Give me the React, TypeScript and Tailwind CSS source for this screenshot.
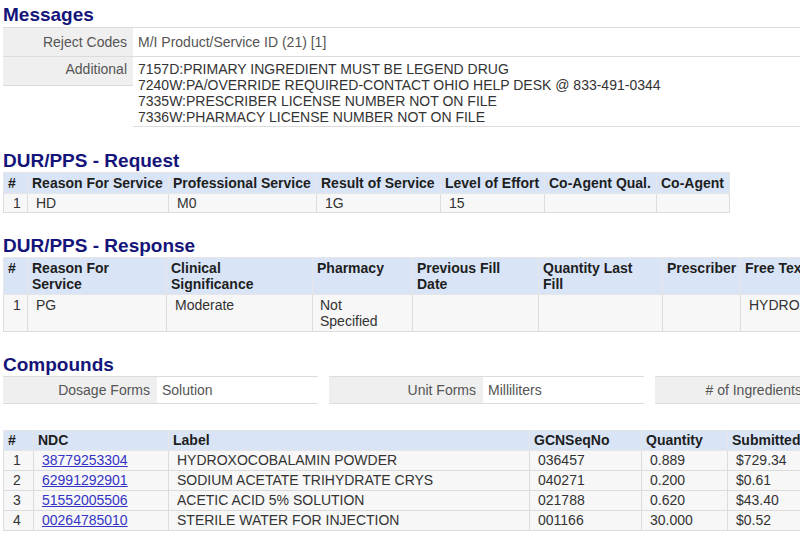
import React from 'react'

const font = { fontFamily: '"Liberation Sans", Arial, sans-serif' }

const heading = 'text-[19px] leading-[22px] font-bold text-[#14147a]'
const th = 'border border-[#e6e6e6] bg-[#d9e5f6] pl-[4px] pr-[3px] py-[2px] text-left align-top font-bold text-[#1e1e1e] leading-[16px] overflow-hidden whitespace-nowrap'
const td = 'border border-[#dcdcdc] bg-[#f7f7f7] pl-[8px] pr-[3px] align-top leading-[16px] text-[#333] overflow-hidden whitespace-nowrap'

const messages = [
  '7157D:PRIMARY INGREDIENT MUST BE LEGEND DRUG',
  '7240W:PA/OVERRIDE REQUIRED-CONTACT OHIO HELP DESK @ 833-491-0344',
  '7335W:PRESCRIBER LICENSE NUMBER NOT ON FILE',
  '7336W:PHARMACY LICENSE NUMBER NOT ON FILE',
]

const compounds = [
  { ndc: '38779253304', label: 'HYDROXOCOBALAMIN POWDER', gcn: '036457', qty: '0.889', submitted: '$729.34' },
  { ndc: '62991292901', label: 'SODIUM ACETATE TRIHYDRATE CRYS', gcn: '040271', qty: '0.200', submitted: '$0.61' },
  { ndc: '51552005506', label: 'ACETIC ACID 5% SOLUTION', gcn: '021788', qty: '0.620', submitted: '$43.40' },
  { ndc: '00264785010', label: 'STERILE WATER FOR INJECTION', gcn: '001166', qty: '30.000', submitted: '$0.52' },
]

const fields = [
  { label: 'Dosage Forms', value: 'Solution' },
  { label: 'Unit Forms', value: 'Milliliters' },
  { label: '# of Ingredients', value: '4' },
]

const App: React.FC = () => {
  return (
    <div className="w-[800px] h-[553px] overflow-hidden bg-white text-[14px] text-[#333]" style={font}>
      <div className="pl-[3px] pt-[4px]">
        <h2 className={heading}>Messages</h2>
        <div className="mt-[1px] border-t border-[#dcdcdc]">
          <div className="flex items-start">
            <div className="w-[130px] shrink-0 bg-[#efefef] border-b border-[#dcdcdc] text-right pr-[6px] pt-[6px] pb-[6px] leading-[16px] text-[#555]">
              Reject Codes
            </div>
            <div className="flex-1 border-b border-[#dcdcdc] pl-[5px] pt-[6px] pb-[6px] leading-[16px] text-[#555]">
              M/I Product/Service ID (21) [1]
            </div>
          </div>
          <div className="flex items-start">
            <div className="w-[130px] shrink-0 bg-[#efefef] border-b border-[#dcdcdc] text-right pr-[6px] pt-[4px] pb-[8px] leading-[16px] text-[#555]">
              Additional
            </div>
            <div className="flex-1 border-b border-[#dcdcdc] pl-[5px] pt-[4px] pb-[1px] leading-[16px] text-[#333]">
              {messages.map((m) => (
                <div key={m}>{m}</div>
              ))}
            </div>
          </div>
        </div>

        <h2 className={`${heading} mt-[23px]`}>DUR/PPS - Request</h2>
        <table className="table-fixed border-collapse w-[726px]">
          <colgroup>
            <col className="w-[24px]" />
            <col className="w-[141px]" />
            <col className="w-[148px]" />
            <col className="w-[124px]" />
            <col className="w-[104px]" />
            <col className="w-[112px]" />
            <col className="w-[73px]" />
          </colgroup>
          <thead>
            <tr>
              <th className={th}>#</th>
              <th className={th}>Reason For Service</th>
              <th className={th}>Professional Service</th>
              <th className={th}>Result of Service</th>
              <th className={th}>Level of Effort</th>
              <th className={th}>Co-Agent Qual.</th>
              <th className={th}>Co-Agent</th>
            </tr>
          </thead>
          <tbody>
            <tr>
              <td className={`${td} py-[1px] !pl-[9px]`}>1</td>
              <td className={`${td} py-[1px]`}>HD</td>
              <td className={`${td} py-[1px]`}>M0</td>
              <td className={`${td} py-[1px]`}>1G</td>
              <td className={`${td} py-[1px]`}>15</td>
              <td className={`${td} py-[1px]`}></td>
              <td className={`${td} py-[1px]`}></td>
            </tr>
          </tbody>
        </table>

        <h2 className={`${heading} mt-[22px]`}>DUR/PPS - Response</h2>
        <table className="table-fixed border-collapse w-[937px]">
          <colgroup>
            <col className="w-[24px]" />
            <col className="w-[139px]" />
            <col className="w-[146px]" />
            <col className="w-[100px]" />
            <col className="w-[126px]" />
            <col className="w-[124px]" />
            <col className="w-[78px]" />
            <col className="w-[200px]" />
          </colgroup>
          <thead>
            <tr>
              <th className={th}>#</th>
              <th className={th}>Reason For<br />Service</th>
              <th className={th}>Clinical<br />Significance</th>
              <th className={th}>Pharmacy</th>
              <th className={th}>Previous Fill<br />Date</th>
              <th className={th}>Quantity Last<br />Fill</th>
              <th className={th}>Prescriber</th>
              <th className={th}>Free Text</th>
            </tr>
          </thead>
          <tbody>
            <tr>
              <td className={`${td} py-[2px] !pl-[9px]`}>1</td>
              <td className={`${td} py-[2px]`}>PG</td>
              <td className={`${td} py-[2px]`}>Moderate</td>
              <td className={`${td} py-[2px] !pl-[7px]`}>Not<br />Specified</td>
              <td className={`${td} py-[2px]`}></td>
              <td className={`${td} py-[2px]`}></td>
              <td className={`${td} py-[2px]`}></td>
              <td className={`${td} py-[2px]`}>HYDROXOCOBALAMIN</td>
            </tr>
          </tbody>
        </table>

        <h2 className={`${heading} mt-[22px]`}>Compounds</h2>
        <div className="flex gap-[11px]">
          {fields.map((f) => (
            <div key={f.label} className="w-[315px] shrink-0 flex border-y border-[#dcdcdc]">
              <div className="w-[154px] shrink-0 bg-[#efefef] text-right pr-[7px] pt-[5px] pb-[5px] leading-[16px] text-[#555]">
                {f.label}
              </div>
              <div className="flex-1 pl-[5px] pt-[5px] pb-[5px] leading-[16px] text-[#555]">{f.value}</div>
            </div>
          ))}
        </div>

        <table className="mt-[26px] table-fixed border-collapse w-[844px]">
          <colgroup>
            <col className="w-[30px]" />
            <col className="w-[135px]" />
            <col className="w-[361px]" />
            <col className="w-[112px]" />
            <col className="w-[86px]" />
            <col className="w-[120px]" />
          </colgroup>
          <thead>
            <tr>
              <th className={`${th} !py-[1px] leading-[17px]`}>#</th>
              <th className={`${th} !py-[1px] leading-[17px]`}>NDC</th>
              <th className={`${th} !py-[1px] leading-[17px]`}>Label</th>
              <th className={`${th} !py-[1px] leading-[17px]`}>GCNSeqNo</th>
              <th className={`${th} !py-[1px] leading-[17px]`}>Quantity</th>
              <th className={`${th} !py-[1px] leading-[17px]`}>Submitted</th>
            </tr>
          </thead>
          <tbody>
            {compounds.map((c, i) => (
              <tr key={c.ndc}>
                <td className={`${td} py-[1px] !leading-[17px] !pl-[9px]`}>{i + 1}</td>
                <td className={`${td} py-[1px] !leading-[17px]`}>
                  <a href="#" className="text-[#3434c6] underline">{c.ndc}</a>
                </td>
                <td className={`${td} py-[1px] !leading-[17px]`}>{c.label}</td>
                <td className={`${td} py-[1px] !leading-[17px]`}>{c.gcn}</td>
                <td className={`${td} py-[1px] !leading-[17px]`}>{c.qty}</td>
                <td className={`${td} py-[1px] !leading-[17px]`}>{c.submitted}</td>
              </tr>
            ))}
          </tbody>
        </table>
      </div>
    </div>
  )
}

export default App
